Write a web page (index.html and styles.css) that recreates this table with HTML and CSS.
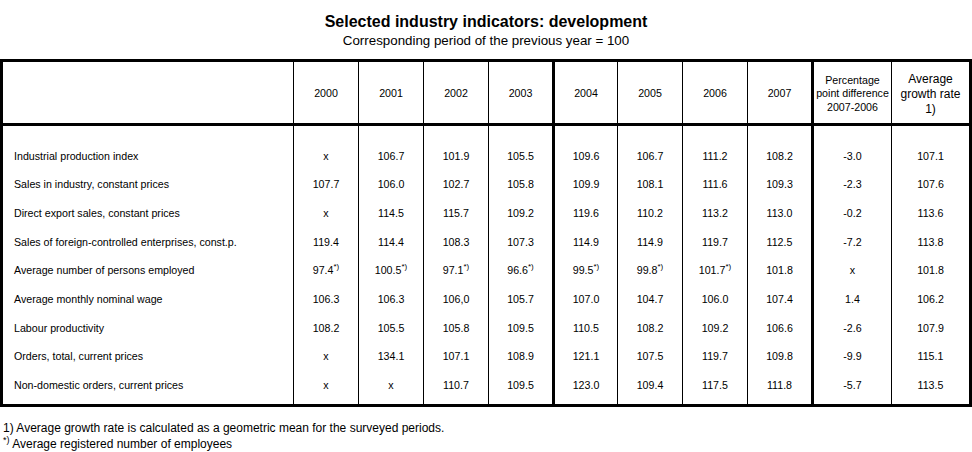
FILE: index.html
```html
<!DOCTYPE html>
<html lang="en">
<head>
<meta charset="utf-8">
<title>Selected industry indicators: development</title>
<link rel="stylesheet" href="styles.css">
</head>
<body>
<h1 class="title">Selected industry indicators: development</h1>
<p class="subtitle">Corresponding period of the previous year = 100</p>
<table class="grid">
  <thead>
    <tr>
      <th class="c-label"></th>
      <th class="c-year">2000</th>
      <th class="c-year">2001</th>
      <th class="c-year">2002</th>
      <th class="c-year thick">2003</th>
      <th class="c-year2">2004</th>
      <th class="c-year">2005</th>
      <th class="c-year">2006</th>
      <th class="c-year thick">2007</th>
      <th class="c-pct">Percentage<br>point difference<br>2007-2006</th>
      <th class="c-avg last">Average<br>growth rate<br>1)</th>
    </tr>
  </thead>
  <tbody>
    <tr class="first">
      <td class="label">Industrial production index</td>
      <td>x</td><td>106.7</td><td>101.9</td><td class="thick">105.5</td><td>109.6</td><td>106.7</td><td>111.2</td><td class="thick">108.2</td><td>-3.0</td><td class="last">107.1</td>
    </tr>
    <tr>
      <td class="label">Sales in industry, constant prices</td>
      <td>107.7</td><td>106.0</td><td>102.7</td><td class="thick">105.8</td><td>109.9</td><td>108.1</td><td>111.6</td><td class="thick">109.3</td><td>-2.3</td><td class="last">107.6</td>
    </tr>
    <tr>
      <td class="label">Direct export sales, constant prices</td>
      <td>x</td><td>114.5</td><td>115.7</td><td class="thick">109.2</td><td>119.6</td><td>110.2</td><td>113.2</td><td class="thick">113.0</td><td>-0.2</td><td class="last">113.6</td>
    </tr>
    <tr>
      <td class="label">Sales of foreign-controlled enterprises, const.p.</td>
      <td>119.4</td><td>114.4</td><td>108.3</td><td class="thick">107.3</td><td>114.9</td><td>114.9</td><td>119.7</td><td class="thick">112.5</td><td>-7.2</td><td class="last">113.8</td>
    </tr>
    <tr>
      <td class="label">Average number of persons employed</td>
      <td>97.4<sup class="fn">*)</sup></td><td>100.5<sup class="fn">*)</sup></td><td>97.1<sup class="fn">*)</sup></td><td class="thick">96.6<sup class="fn">*)</sup></td><td>99.5<sup class="fn">*)</sup></td><td>99.8<sup class="fn">*)</sup></td><td>101.7<sup class="fn">*)</sup></td><td class="thick">101.8</td><td>x</td><td class="last">101.8</td>
    </tr>
    <tr>
      <td class="label">Average monthly nominal wage</td>
      <td>106.3</td><td>106.3</td><td>106,0</td><td class="thick">105.7</td><td>107.0</td><td>104.7</td><td>106.0</td><td class="thick">107.4</td><td>1.4</td><td class="last">106.2</td>
    </tr>
    <tr>
      <td class="label">Labour productivity</td>
      <td>108.2</td><td>105.5</td><td>105.8</td><td class="thick">109.5</td><td>110.5</td><td>108.2</td><td>109.2</td><td class="thick">106.6</td><td>-2.6</td><td class="last">107.9</td>
    </tr>
    <tr>
      <td class="label">Orders, total, current prices</td>
      <td>x</td><td>134.1</td><td>107.1</td><td class="thick">108.9</td><td>121.1</td><td>107.5</td><td>119.7</td><td class="thick">109.8</td><td>-9.9</td><td class="last">115.1</td>
    </tr>
    <tr class="final">
      <td class="label">Non-domestic orders, current prices</td>
      <td>x</td><td>x</td><td>110.7</td><td class="thick">109.5</td><td>123.0</td><td>109.4</td><td>117.5</td><td class="thick">111.8</td><td>-5.7</td><td class="last">113.5</td>
    </tr>
  </tbody>
</table>
<div class="notes">
  <p class="note">1) Average growth rate is calculated as a geometric mean for the surveyed periods.</p>
  <p class="note"><sup class="fn-note">*)</sup> Average registered number of employees</p>
</div>
</body>
</html>
```

FILE: styles.css
```css
html, body {
  margin: 0;
  padding: 0;
  background: #fff;
}

body {
  font-family: "Liberation Sans", Arial, sans-serif;
  color: #000;
}

.title {
  margin: 13px 0 0;
  font-size: 16px;
  line-height: 18px;
  font-weight: bold;
  text-align: center;
}

.subtitle {
  margin: 2px 0 0;
  font-size: 13.33px;
  line-height: 16px;
  text-align: center;
}

.grid {
  margin-top: 10px;
  width: 972px;
  table-layout: fixed;
  border-collapse: separate;
  border-spacing: 0;
  border: 3px solid #000;
  font-size: 10.67px;
}

.grid th,
.grid td {
  box-sizing: border-box;
  padding: 0;
  border-right: 1px solid #000;
  text-align: center;
  vertical-align: middle;
  white-space: nowrap;
}

.grid th {
  height: 64px;
  padding-top: 3px;
  font-weight: normal;
  line-height: 13.5px;
  border-bottom: 3px solid #000;
}

.grid .thick {
  border-right-width: 3px;
}

.grid .last {
  border-right: 0;
}

.c-label { width: 291px; }
.c-year { width: 65px; }
.c-year.thick { width: 66px; }
.c-year2 { width: 63px; }
.c-pct { width: 78px; }
.c-avg { width: 77px; }

.grid th.c-avg {
  font-size: 12px;
  line-height: 15px;
}

.grid tbody tr {
  height: 28.67px;
}

.grid tbody tr.first {
  height: 44.67px;
}

.grid tbody tr.first td {
  padding-top: 16px;
}

.grid tbody tr.final {
  height: 32.64px;
}

.grid tbody tr.final td {
  padding-bottom: 4px;
}

.grid td {
  line-height: 13px;
}

.grid td.label {
  text-align: left;
  padding-left: 11px;
}

.fn {
  font-size: 8px;
  line-height: 0;
  vertical-align: 5px;
}

.notes {
  margin-top: 13px;
  padding-left: 3px;
  font-size: 12px;
  line-height: 16px;
}

.note {
  margin: 0;
}

.fn-note {
  font-size: 9px;
  line-height: 0;
  vertical-align: 5px;
}
```
